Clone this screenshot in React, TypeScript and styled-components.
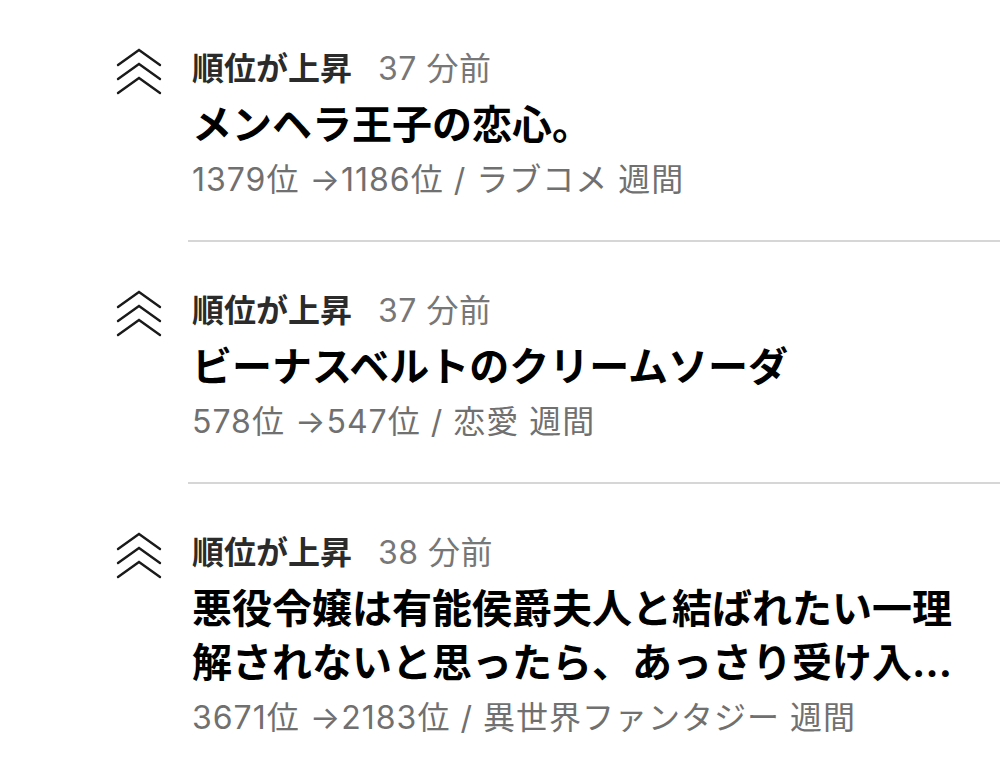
import React from 'react';
import styled, { createGlobalStyle } from 'styled-components';

interface RankingItem {
    id: number;
    minutesAgo: number;
    title: string;
    fromRank: number;
    toRank: number;
    genre: string;
    period: string;
}

const items: RankingItem[] = [
    {
        id: 1,
        minutesAgo: 37,
        title: 'メンヘラ王子の恋心。',
        fromRank: 1379,
        toRank: 1186,
        genre: 'ラブコメ',
        period: '週間',
    },
    {
        id: 2,
        minutesAgo: 37,
        title: 'ビーナスベルトのクリームソーダ',
        fromRank: 578,
        toRank: 547,
        genre: '恋愛',
        period: '週間',
    },
    {
        id: 3,
        minutesAgo: 38,
        title: '悪役令嬢は有能侯爵夫人と結ばれたい一理解されないと思ったら、あっさり受け入れてもらえました',
        fromRank: 3671,
        toRank: 2183,
        genre: '異世界ファンタジー',
        period: '週間',
    },
];

const RankUpIcon: React.FC = () => (
    <IconSvg viewBox="0 0 46 48" width={46} height={48}>
        <g fill="none" stroke="#1a1a1a" strokeWidth={2.4} strokeLinecap="round">
            <path d="M2 17 L23 2 L44 17" />
            <path d="M2 31 L23 16 L44 31" />
            <path d="M2 45 L23 30 L44 45" />
        </g>
    </IconSvg>
);

const App: React.FC = () => (
    <>
        <GlobalStyle />
        <List>
            {items.map((item) => (
                <Row key={item.id}>
                    <IconColumn>
                        <RankUpIcon />
                    </IconColumn>
                    <Content>
                        <Header>
                            <Label>順位が上昇</Label>
                            <Time>{item.minutesAgo} 分前</Time>
                        </Header>
                        <Title>{item.title}</Title>
                        <Meta>
                            {item.fromRank}位 →{item.toRank}位 / {item.genre} {item.period}
                        </Meta>
                    </Content>
                </Row>
            ))}
        </List>
    </>
);

const GlobalStyle = createGlobalStyle`
    body {
        margin: 0;
        background: #ffffff;
        font-family: Inter, "Noto Sans CJK JP", sans-serif;
    }
`;

const List = styled.div`
    display: flex;
    flex-flow: column;
    padding-left: 116px;
`;

const Row = styled.div`
    display: flex;
    flex-flow: row;
    gap: 26px;
`;

const IconColumn = styled.div`
    flex: 0 0 46px;
    padding-top: 48px;
`;

const IconSvg = styled.svg`
    display: block;
`;

const Content = styled.div`
    flex: 1;
    min-width: 0;
    padding: 44px 38px 38px 4px;
    border-bottom: 2px solid #d6d6d6;
`;

const Header = styled.div`
    display: flex;
    flex-flow: row;
    align-items: center;
    gap: 26px;
    height: 44px;
    font-size: 32px;
`;

const Label = styled.span`
    font-weight: 700;
    color: #2b2b2b;
`;

const Time = styled.span`
    color: #777777;
    letter-spacing: 0.5px;
`;

const Title = styled.div`
    margin-top: 10px;
    font-size: 40px;
    line-height: 54px;
    font-weight: 700;
    color: #000000;
    display: -webkit-box;
    -webkit-line-clamp: 2;
    -webkit-box-orient: vertical;
    overflow: hidden;
`;

const Meta = styled.div`
    margin-top: 6px;
    font-size: 32px;
    line-height: 44px;
    letter-spacing: 1px;
    color: #707070;
`;

export default App;
